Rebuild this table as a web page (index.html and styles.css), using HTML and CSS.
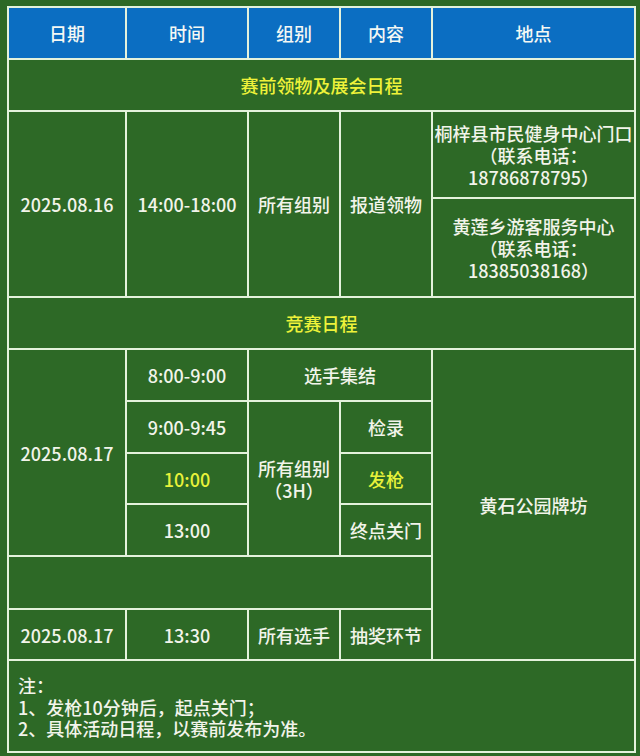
FILE: index.html
```html
<!DOCTYPE html>
<html lang="zh-CN">
<head>
<meta charset="utf-8">
<title>赛程安排</title>
<link rel="stylesheet" href="styles.css">
</head>
<body>
<table class="sched">
  <colgroup>
    <col class="c1"><col class="c2"><col class="c3"><col class="c4"><col class="c5">
  </colgroup>
  <tr class="r-head">
    <th>日期</th><th>时间</th><th>组别</th><th>内容</th><th>地点</th>
  </tr>
  <tr class="r-sec">
    <td colspan="5" class="sec">赛前领物及展会日程</td>
  </tr>
  <tr class="r-a1">
    <td rowspan="2">2025.08.16</td>
    <td rowspan="2">14:00-18:00</td>
    <td rowspan="2">所有组别</td>
    <td rowspan="2">报道领物</td>
    <td class="loc">桐梓县市民健身中心门口<br>（联系电话：<br>18786878795）</td>
  </tr>
  <tr class="r-a2">
    <td class="loc">黄莲乡游客服务中心<br>（联系电话：<br>18385038168）</td>
  </tr>
  <tr class="r-sec">
    <td colspan="5" class="sec">竞赛日程</td>
  </tr>
  <tr class="r-b">
    <td rowspan="4">2025.08.17</td>
    <td>8:00-9:00</td>
    <td colspan="2">选手集结</td>
    <td rowspan="6">黄石公园牌坊</td>
  </tr>
  <tr class="r-b">
    <td>9:00-9:45</td>
    <td rowspan="3" class="grp">所有组别<br>（3H）</td>
    <td>检录</td>
  </tr>
  <tr class="r-b r-short">
    <td class="hl">10:00</td>
    <td class="hl">发枪</td>
  </tr>
  <tr class="r-b">
    <td>13:00</td>
    <td>终点关门</td>
  </tr>
  <tr class="r-empty">
    <td colspan="4"></td>
  </tr>
  <tr class="r-b r-short">
    <td>2025.08.17</td>
    <td>13:30</td>
    <td>所有选手</td>
    <td>抽奖环节</td>
  </tr>
  <tr class="r-note">
    <td colspan="5" class="note">注：<br>1、发枪10分钟后，起点关门；<br>2、具体活动日程，以赛前发布为准。</td>
  </tr>
</table>
</body>
</html>
```

FILE: styles.css
```css
html, body {
  margin: 0;
  padding: 0;
  background: #2d6926;
}
body {
  padding: 6px 6px 0 7px;
  font-family: "Noto Sans CJK SC", "Noto Sans", sans-serif;
  color: #f2f4ea;
  font-size: 18px;
}
.sched {
  width: 628px;
  table-layout: fixed;
  border-collapse: collapse;
  border: 2px solid #e4f2dc;
}
.c1 { width: 118px; }
.c2 { width: 122px; }
.c3 { width: 92px; }
.c4 { width: 92px; }
.c5 { width: 203px; }
.sched th,
.sched td {
  border: 2px solid #e4f2dc;
  padding: 0;
  text-align: center;
  vertical-align: middle;
  font-weight: 500;
  line-height: 22px;
}
.sched th {
  background: #0b6ec2;
  color: #f4f8f4;
}
.r-head { height: 52px; }
.r-sec { height: 52px; }
.r-a1 { height: 87px; }
.r-a2 { height: 99px; }
.r-b { height: 52px; }
.r-b.r-short { height: 51px; }
.r-empty { height: 53px; }
.r-note { height: 92px; }
.sec {
  color: #eef23a;
  font-weight: 700;
}
.hl { color: #e8f23a; }
.loc { line-height: 22.5px; }
.grp { line-height: 22px; }
.sched td.note {
  text-align: left;
  vertical-align: top;
  padding: 14px 8px 0 9px;
  line-height: 21.5px;
}
```
